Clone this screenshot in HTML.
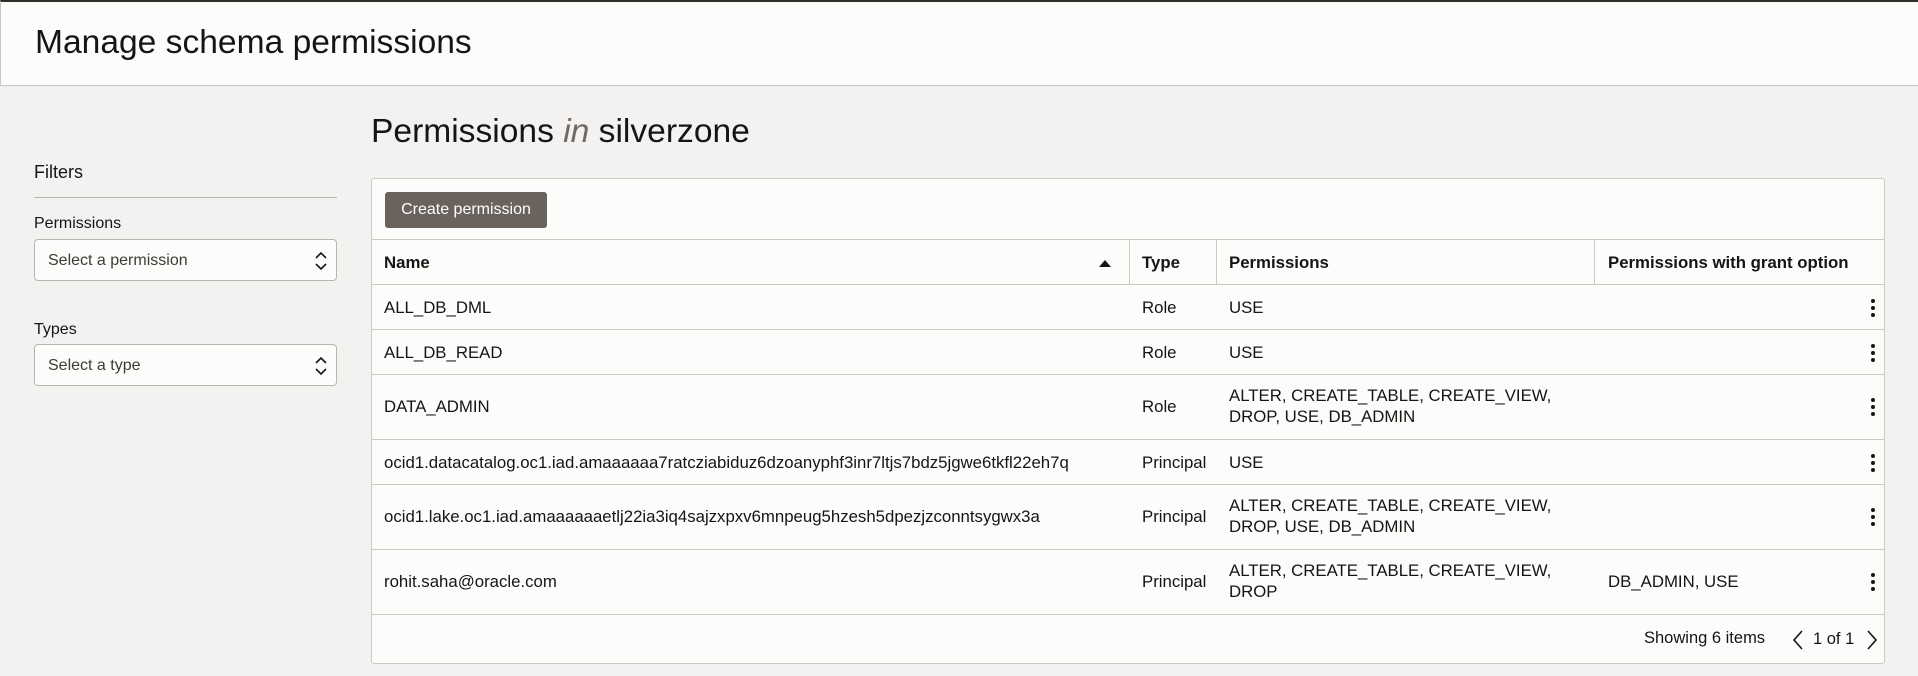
<!DOCTYPE html>
<html><head><meta charset="utf-8"><style>
*{box-sizing:border-box;margin:0;padding:0}
body{width:1918px;height:676px;background:#f3f2f1;font-family:"Liberation Sans",sans-serif;color:#161513;position:relative;overflow:hidden}
.hdr{position:absolute;left:0;top:0;width:1918px;height:86px;background:#fcfcfb;border-top:2px solid #312d2a;border-bottom:1px solid #c9c7c5;border-left:1px solid #c9c7c5}
.hdr h1{position:absolute;left:34px;top:22px;font-size:33.6px;font-weight:normal}
.ab{position:absolute}
.sel{position:absolute;left:34px;width:303px;height:42px;background:#fcfcfb;border:1px solid #b8b6b3;border-radius:4px;font-size:16px;color:#3f3b38;padding:12px 0 0 13px}
.sel svg{position:absolute;right:8px;top:11px}
.card{position:absolute;left:371px;top:178px;width:1514px;height:486px;background:#fcfcfb;border:1px solid #cbc9c6;border-radius:3px}
.btn{position:absolute;left:13px;top:13px;width:162px;height:36px;background:#6a625d;border-radius:3px;color:#fff;font-size:16px;line-height:36px;text-align:center}
.hl{position:absolute;left:0;width:1512px;height:1px;background:#cbc9c6}
.vl{position:absolute;top:61px;width:1px;height:45px;background:#cbc9c6}
.t{position:absolute;font-size:16.8px;line-height:21px;white-space:nowrap}
.b{font-weight:bold}
.k{position:absolute;left:1499px;width:4px}
.k i{display:block;width:4px;height:4px;border-radius:2px;background:#161513;margin-bottom:3px}
</style></head><body>
<div class="hdr"><h1>Manage schema permissions</h1></div>
<div class="ab" style="left:371px;top:113px;font-size:33.6px">Permissions <i style="color:#6f6a66">in</i> silverzone</div>
<div class="ab" style="left:34px;top:162px;font-size:18px">Filters</div>
<div class="ab" style="left:34px;top:197px;width:303px;height:1px;background:#b8b6b3"></div>
<div class="ab" style="left:34px;top:215px;font-size:16px">Permissions</div>
<div class="sel" style="top:239px">Select a permission<svg width="14" height="20" viewBox="0 0 14 20"><path d="M2 7l5-5 5 5M2 13l5 5 5-5" fill="none" stroke="#161513" stroke-width="1.6"/></svg></div>
<div class="ab" style="left:34px;top:321px;font-size:16px">Types</div>
<div class="sel" style="top:344px">Select a type<svg width="14" height="20" viewBox="0 0 14 20"><path d="M2 7l5-5 5 5M2 13l5 5 5-5" fill="none" stroke="#161513" stroke-width="1.6"/></svg></div>
<div class="card">
<div class="btn">Create permission</div>
<div class="hl" style="top:60px"></div>
<div class="vl" style="left:757px"></div><div class="vl" style="left:844px"></div><div class="vl" style="left:1222px"></div>
<div class="t b" style="left:12px;top:73px">Name</div>
<svg class="ab" style="left:727px;top:80px" width="12" height="8"><path d="M0 8L6 1 12 8z" fill="#161513"/></svg>
<div class="t b" style="left:770px;top:73px">Type</div>
<div class="t b" style="left:857px;top:73px">Permissions</div>
<div class="t b" style="left:1236px;top:73px">Permissions with grant option</div>
<div class="hl" style="top:105px"></div>
<div class="t" style="left:12px;top:118px">ALL_DB_DML</div><div class="t" style="left:770px;top:118px">Role</div><div class="t" style="left:857px;top:118px">USE</div>
<div class="k" style="top:120px"><i></i><i></i><i></i></div>
<div class="hl" style="top:150px"></div>
<div class="t" style="left:12px;top:163px">ALL_DB_READ</div><div class="t" style="left:770px;top:163px">Role</div><div class="t" style="left:857px;top:163px">USE</div>
<div class="k" style="top:165px"><i></i><i></i><i></i></div>
<div class="hl" style="top:195px"></div>
<div class="t" style="left:12px;top:217px">DATA_ADMIN</div><div class="t" style="left:770px;top:217px">Role</div><div class="t" style="left:857px;top:206px">ALTER, CREATE_TABLE, CREATE_VIEW,<br>DROP, USE, DB_ADMIN</div>
<div class="k" style="top:219px"><i></i><i></i><i></i></div>
<div class="hl" style="top:260px"></div>
<div class="t" style="left:12px;top:273px">ocid1.datacatalog.oc1.iad.amaaaaaa7ratcziabiduz6dzoanyphf3inr7ltjs7bdz5jgwe6tkfl22eh7q</div><div class="t" style="left:770px;top:273px">Principal</div><div class="t" style="left:857px;top:273px">USE</div>
<div class="k" style="top:275px"><i></i><i></i><i></i></div>
<div class="hl" style="top:305px"></div>
<div class="t" style="left:12px;top:327px">ocid1.lake.oc1.iad.amaaaaaaetlj22ia3iq4sajzxpxv6mnpeug5hzesh5dpezjzconntsygwx3a</div><div class="t" style="left:770px;top:327px">Principal</div><div class="t" style="left:857px;top:316px">ALTER, CREATE_TABLE, CREATE_VIEW,<br>DROP, USE, DB_ADMIN</div>
<div class="k" style="top:329px"><i></i><i></i><i></i></div>
<div class="hl" style="top:370px"></div>
<div class="t" style="left:12px;top:392px">rohit.saha@oracle.com</div><div class="t" style="left:770px;top:392px">Principal</div><div class="t" style="left:857px;top:381px">ALTER, CREATE_TABLE, CREATE_VIEW,<br>DROP</div><div class="t" style="left:1236px;top:392px">DB_ADMIN, USE</div>
<div class="k" style="top:394px"><i></i><i></i><i></i></div>
<div class="hl" style="top:435px"></div>
<div class="t" style="left:1272px;top:449px;font-size:16.5px">Showing 6 items</div>
<svg class="ab" style="left:1420px;top:451px" width="12" height="20"><path d="M10 1L2 10l8 9" fill="none" stroke="#161513" stroke-width="1.6"/></svg>
<div class="t" style="left:1441px;top:450px;font-size:16.5px">1 of 1</div>
<svg class="ab" style="left:1494px;top:451px" width="12" height="20"><path d="M2 1l8 9-8 9" fill="none" stroke="#161513" stroke-width="1.6"/></svg>
</div>
</body></html>
